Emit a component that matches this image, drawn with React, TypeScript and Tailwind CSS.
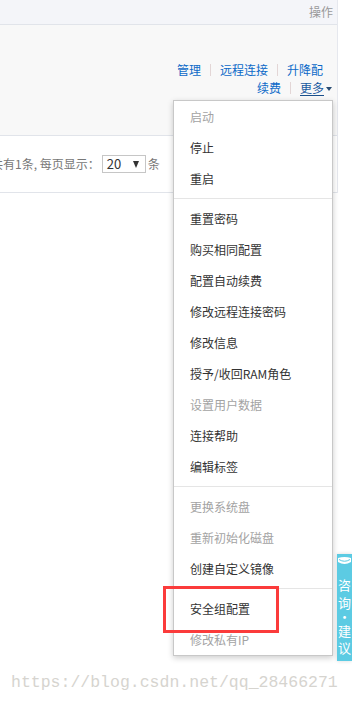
import { Fragment } from 'react';

const cjk = { fontFamily: '"Noto Sans CJK SC", "Liberation Sans", sans-serif' };

// menu groups, split by dividers; disabled items are greyed out
const menuGroups: { label: string; disabled?: boolean }[][] = [
  [{ label: '启动', disabled: true }, { label: '停止' }, { label: '重启' }],
  [
    { label: '重置密码' },
    { label: '购买相同配置' },
    { label: '配置自动续费' },
    { label: '修改远程连接密码' },
    { label: '修改信息' },
    { label: '授予/收回RAM角色' },
    { label: '设置用户数据', disabled: true },
    { label: '连接帮助' },
    { label: '编辑标签' },
  ],
  [
    { label: '更换系统盘', disabled: true },
    { label: '重新初始化磁盘', disabled: true },
    { label: '创建自定义镜像' },
  ],
  [{ label: '安全组配置' }, { label: '修改私有IP', disabled: true }],
];

function Sep() {
  return <span className="mx-[9px] inline-block h-[12px] w-px bg-[#e3d6d6]" />;
}

export default function App() {
  return (
    <div className="relative h-[705px] w-[352px] overflow-hidden bg-white text-[12px]" style={cjk}>
      <div className="w-[338px] border-r border-[#e6e8ee]">
        {/* table header */}
        <div className="flex h-[25px] items-center justify-end border-b border-[#e1e4ea] bg-[#f4f5f9] pr-[4px] text-[#999]">
          操作
        </div>

        {/* instance row */}
        <div className="flex h-[111px] flex-col items-end border-b border-[#e1e4ea] bg-[#f8f8f8] pt-[36px] pr-[5px] text-[#0d6ac8]">
          <div className="mr-[9px] flex h-[18px] items-center">
            <span>管理</span>
            <Sep />
            <span>远程连接</span>
            <Sep />
            <span>升降配</span>
          </div>
          <div className="flex h-[18px] items-center">
            <span>续费</span>
            <Sep />
            <span className="border-b border-[#1a4f8a] leading-[14px] text-[#1a5aa0]">更多</span>
            <span className="ml-[2px] mt-[2px] h-0 w-0 border-x-[3.5px] border-t-[4px] border-x-transparent border-t-[#2a4d74]" />
          </div>
        </div>

        {/* pagination */}
        <div className="flex h-[57px] items-center border-b border-[#e1e4ea] text-[#777]">
          <div className="ml-[-9px] flex items-center whitespace-nowrap">
            <span>共有1条, 每页显示：</span>
            <div className="ml-[2px] flex h-[18px] w-[44px] items-center border border-[#c6c6c6] pl-[4px] text-[#333]">
              <span className="text-[13px]">20</span>
              <span className="ml-auto mr-[6px] h-0 w-0 border-x-[3.5px] border-t-[7px] border-x-transparent border-t-[#333]" />
            </div>
            <span className="ml-[2px]">条</span>
          </div>
        </div>
      </div>

      {/* "更多" dropdown */}
      <div className="absolute left-[173px] top-[100px] w-[160px] border border-[#c8c8c8] bg-white shadow-[0_2px_6px_rgba(0,0,0,0.2)]">
        {menuGroups.map((group, gi) => (
          <Fragment key={gi}>
            {gi > 0 && <div className="my-[4px] h-px bg-[#e5e5e5]" />}
            {group.map((item) => (
              <div
                key={item.label}
                className={`flex h-[31px] items-center pl-[16px] ${item.disabled ? 'text-[#a3a3a3]' : 'text-[#333]'}`}
              >
                {item.label}
              </div>
            ))}
          </Fragment>
        ))}
      </div>

      {/* highlight annotation */}
      <div className="absolute left-[163px] top-[586px] h-[47px] w-[116px] border-[3px] border-[#fb3b3b]" />

      {/* side feedback tab */}
      <div className="absolute left-[337px] top-[554px] flex h-[107px] w-[15px] flex-col items-center bg-[#5ccbe3] text-[13px] leading-[16px] text-white shadow-[0_0_4px_rgba(0,0,0,0.15)]">
        <svg width="13" height="10" viewBox="0 0 13 10" className="mt-[2px]">
          <path d="M0 2 Q6.5 0 13 2 L13 6 Q6.5 10 0 6 Z" fill="#ffffff" />
          <path d="M1 3.5 Q6.5 7 12 3.5" stroke="#5ccbe3" strokeWidth="1" fill="none" />
        </svg>
        <span className="mt-[11px]">咨</span>
        <span className="mt-[2px]">询</span>
        <span className="leading-[12px]">·</span>
        <span>建</span>
        <span className="mt-[1px]">议</span>
      </div>

      {/* watermark */}
      <div
        className="absolute left-[11px] top-[672px] whitespace-nowrap text-[16.5px] leading-[22px] text-[#d6d4cf]"
        style={{ fontFamily: '"Liberation Mono", monospace' }}
      >
        https://blog.csdn.net/qq_28466271
      </div>
    </div>
  );
}
